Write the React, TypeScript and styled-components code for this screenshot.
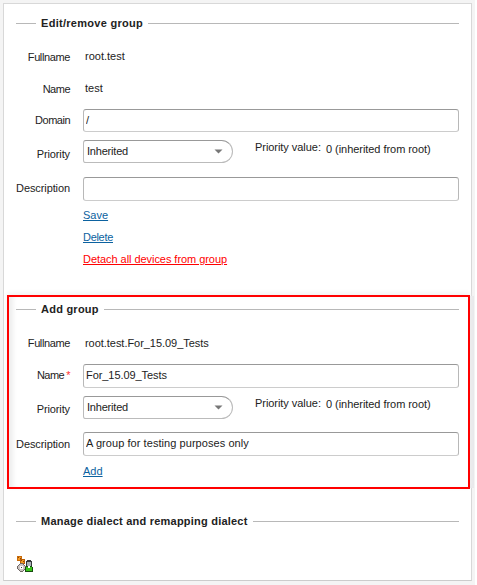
import React from "react";
import styled, { createGlobalStyle } from "styled-components";

const GlobalStyle = createGlobalStyle`
  * { box-sizing: border-box; }
  body {
    margin: 0;
    background: #fff;
    color: #222;
    font: 11px/14px "Liberation Sans", Arial, sans-serif;
  }
`;

const Page = styled.div`
  width: 475px;
  height: 585px;
  padding: 3px 0 0 3px;
  background: #f4f4f4;
`;

const Panel = styled.main`
  width: 469px;
  height: 578px;
  padding-top: 7px;
  background: #fff;
  border: 1px solid #d8d8d8;
  border-bottom-color: #ccc;
`;

const Group = styled.section<{ $height: number; $top?: number }>`
  height: ${(p) => p.$height}px;
  padding: ${(p) => p.$top ?? 4}px 12px 0;
`;

const HighlightedGroup = styled.section`
  width: 463px;
  height: 194px;
  margin: 0 0 0 3px;
  padding: 4px 9px 0 7px;
  border: 2px solid #f00;
  box-shadow: inset 6px 0 5px -2px #eee, 0 -2px 5px #f2f2f2, 5px 0 0 -1px #e9e9eb;
`;

const Legend = styled.h2<{ $spacing?: number }>`
  display: flex;
  align-items: center;
  height: 16px;
  margin: 0;
  font-size: 11px;
  line-height: 16px;
  font-weight: bold;
  white-space: nowrap;
  letter-spacing: ${(p) => p.$spacing ?? 0}px;
  &::before, &::after {
    content: "";
    height: 1px;
    background: #b8b8b8;
  }
  &::before { width: 20px; margin-right: 5px; }
  &::after { flex: 1; margin-left: 5px; }
`;

const Row = styled.div<{ $gap: number; $height: number }>`
  display: grid;
  grid-template-columns: 54px 376px;
  column-gap: 13px;
  height: ${(p) => p.$height}px;
  margin-top: ${(p) => p.$gap}px;
`;

const Label = styled.label<{ $top?: number; $spacing?: number }>`
  padding-top: ${(p) => p.$top ?? 0}px;
  text-align: right;
  white-space: nowrap;
  letter-spacing: ${(p) => p.$spacing ?? 0}px;
`;

const Required = styled.span`
  margin-left: 2px;
  color: #f33;
`;

const Value = styled.span<{ $spacing?: number }>`
  padding-left: 2px;
  white-space: nowrap;
  letter-spacing: ${(p) => p.$spacing ?? 0}px;
`;

const Input = styled.input<{ $spacing?: number }>`
  width: 376px;
  height: 100%;
  padding: 0 2px 2px;
  border: 1px solid #b8b8b8;
  border-top-color: #999;
  border-bottom-color: #ccc;
  border-radius: 3px;
  background: #fff;
  color: #222;
  font: inherit;
  letter-spacing: ${(p) => p.$spacing ?? 0}px;
`;

const PriorityField = styled.div`
  display: flex;
  align-items: flex-start;
`;

const Select = styled.button`
  display: flex;
  align-items: center;
  justify-content: space-between;
  width: 150px;
  height: 23px;
  padding: 0 9px 1px 3px;
  border: 1px solid #bbb;
  border-top-color: #999;
  border-radius: 3px 12px 12px 3px;
  background: #fff;
  color: #222;
  font: inherit;
  letter-spacing: -0.2px;
`;

const PriorityText = styled.span<{ $left: number; $top: number; $width?: number }>`
  width: ${(p) => (p.$width ? `${p.$width}px` : "auto")};
  margin-left: ${(p) => p.$left}px;
  padding-top: ${(p) => p.$top}px;
  white-space: nowrap;
  letter-spacing: -0.05px;
`;

const Actions = styled.nav<{ $gap: number }>`
  display: flex;
  flex-direction: column;
  align-items: flex-start;
  gap: 8px;
  margin: ${(p) => p.$gap}px 0 0 67px;
`;

const Link = styled.a<{ $danger?: boolean; $spacing?: number }>`
  color: ${(p) => (p.$danger ? "#f00" : "#0c62a0")};
  text-decoration: underline;
  text-underline-offset: 1px;
  letter-spacing: ${(p) => p.$spacing ?? 0}px;
`;

const IconButton = styled.a`
  display: block;
  width: 16px;
  height: 16px;
  margin: 27px 0 0 1px;
  svg { display: block; }
`;

interface PriorityProps {
  gap: number;
  labelTop?: number;
  valueTop?: number;
}

const Priority = ({ gap, labelTop = 7, valueTop = 2 }: PriorityProps) => (
  <Row $gap={gap} $height={23}>
    <Label $top={labelTop} $spacing={-0.12}>Priority</Label>
    <PriorityField>
      <Select type="button">
        Inherited
        <svg width="9" height="5" viewBox="0 0 9 5"><path d="M0.5 0.5h8L4.5 4.5z" fill="#777" /></svg>
      </Select>
      <PriorityText $left={22} $top={0} $width={66}>Priority value:</PriorityText>
      <PriorityText $left={5} $top={valueTop}>0 (inherited from root)</PriorityText>
    </PriorityField>
  </Row>
);

const DialectIcon = () => (
  <svg width="16" height="16" viewBox="0 0 16 16" shapeRendering="crispEdges">
    <path d="M0 0h5v5H0z" fill="#c96a08" />
    <path d="M1 1h3v3H1z" fill="#f39a24" />
    <path d="M3 3h5v5H3z" fill="#b95f07" />
    <path d="M4 4h3v3H4z" fill="#f39a24" />
    <path d="M1 1h1v1H1zM3 2h1v1H3zM4 4h1v1H4zM6 5h1v1H6z" fill="#8a4506" />
    <path d="M3 7h3v1h1v1h1v1h1v3H8v1H7v1H6v1H3v-1H2v-1H1v-1H0v-3h1V9h1V8h1z" fill="#6f6664" />
    <path d="M3 8h3v1h1v1h1v3H7v1H6v1H3v-1H2v-1H1v-3h1V9h1z" fill="#c9c2c0" />
    <path d="M3 10h3v3H3z" fill="#fff" />
    <path d="M4 11h1v1H4z" fill="#333" />
    <path d="M10 4h4v1h1v6H9V5h1z" fill="#35383b" />
    <path d="M10 6h4v4h-4z" fill="#a9b1b6" />
    <path d="M9 10h6v1h1v5H8v-5h1z" fill="#174b10" />
    <path d="M9 11h6v4H9z" fill="#38c41b" />
    <path d="M11 10h2v2h-2z" fill="#fff" />
  </svg>
);

export default function App() {
  return (
    <>
      <GlobalStyle />
      <Page>
        <Panel>
          <Group $height={284}>
            <Legend $spacing={0.29}>Edit/remove group</Legend>
            <Row $gap={18} $height={14}><Label $top={1} $spacing={-0.38}>Fullname</Label><Value>root.test</Value></Row>
            <Row $gap={18} $height={14}><Label $top={1} $spacing={-0.5}>Name</Label><Value>test</Value></Row>
            <Row $gap={14} $height={23}><Label $top={4} $spacing={-0.5}>Domain</Label><Input defaultValue="/" /></Row>
            <Priority gap={8} />
            <Row $gap={14} $height={24}><Label $top={4} $spacing={-0.1}>Description</Label><Input /></Row>
            <Actions $gap={7}>
              <Link>Save</Link>
              <Link $spacing={-0.3}>Delete</Link>
              <Link $danger $spacing={-0.05}>Detach all devices from group</Link>
            </Actions>
          </Group>
          <HighlightedGroup>
            <Legend $spacing={0.24}>Add group</Legend>
            <Row $gap={19} $height={14}><Label $spacing={-0.38}>Fullname</Label><Value $spacing={-0.04}>root.test.For_15.09_Tests</Value></Row>
            <Row $gap={14} $height={24}><Label $top={4} $spacing={-0.5}>Name<Required>*</Required></Label><Input defaultValue="For_15.09_Tests" $spacing={-0.07} /></Row>
            <Priority gap={8} labelTop={6} valueTop={1} />
            <Row $gap={13} $height={24}><Label $top={5} $spacing={-0.1}>Description</Label><Input defaultValue="A group for testing purposes only" $spacing={0.06} /></Row>
            <Actions $gap={8}><Link>Add</Link></Actions>
          </HighlightedGroup>
          <Group $height={88} $top={24}>
            <Legend $spacing={0.22}>Manage dialect and remapping dialect</Legend>
            <IconButton><DialectIcon /></IconButton>
          </Group>
        </Panel>
      </Page>
    </>
  );
}
